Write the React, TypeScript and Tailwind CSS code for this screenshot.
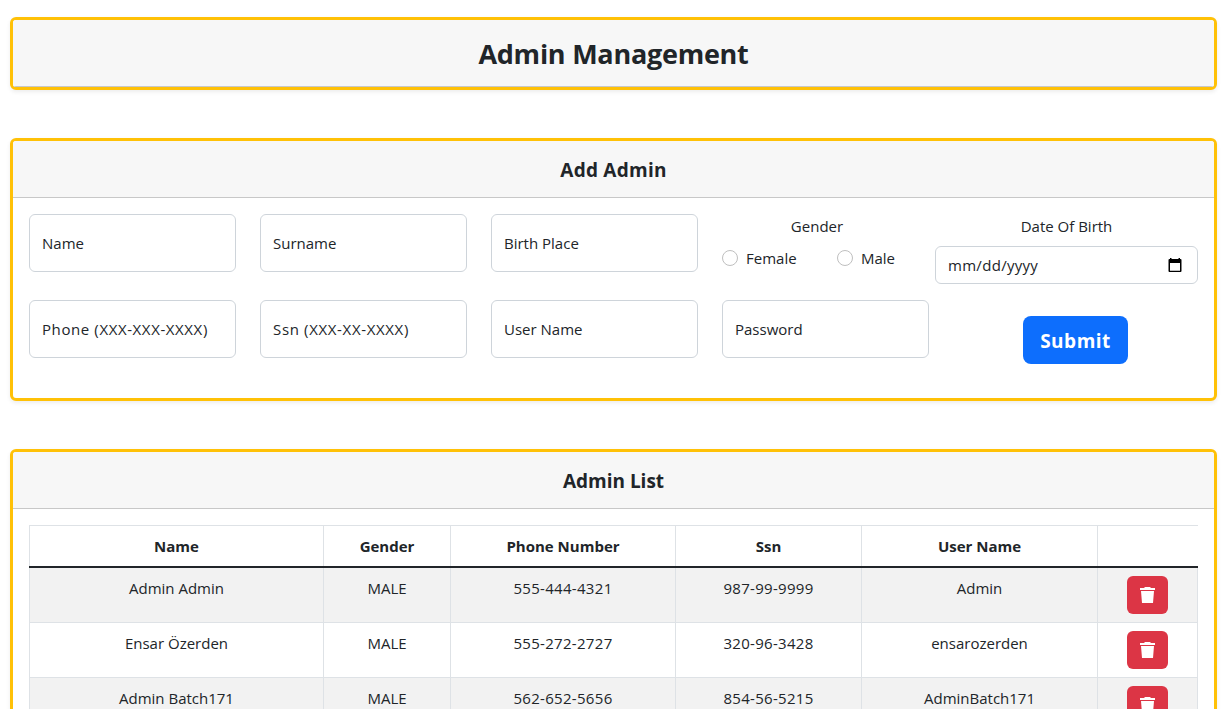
import React from "react";

const columns = ["Name", "Gender", "Phone Number", "Ssn", "User Name", ""];

const admins = [
  ["Admin Admin", "MALE", "555-444-4321", "987-99-9999", "Admin"],
  ["Ensar Özerden", "MALE", "555-272-2727", "320-96-3428", "ensarozerden"],
  ["Admin Batch171", "MALE", "562-652-5656", "854-56-5215", "AdminBatch171"],
];

const gridColumns = "grid grid-cols-[294px_127px_225px_186px_236px_101px]";

function Card({ children, className = "" }: { children: React.ReactNode; className?: string }) {
  return (
    <section className={`overflow-hidden rounded-[6px] border-[3px] border-[#ffc107] bg-white shadow-[0_2px_4px_rgba(0,0,0,0.075)] ${className}`}>
      {children}
    </section>
  );
}

function CardHeader({ title, className = "" }: { title: string; className?: string }) {
  return (
    <header className="flex h-[57px] items-center justify-center border-b border-[#c8c8c8] bg-[#f7f7f7] pt-0.5">
      <h2 className={`text-[19px] leading-6 font-bold ${className}`}>{title}</h2>
    </header>
  );
}

function Field({ label, className = "" }: { label: string; className?: string }) {
  return (
    <label className="flex h-[58px] w-[207px] items-center rounded-[6px] border border-[#ced4da] px-3">
      <span className={`whitespace-nowrap ${className}`}>{label}</span>
    </label>
  );
}

function Radio({ label }: { label: string }) {
  return (
    <label className="flex items-center gap-2">
      <input type="radio" name="gender" className="size-4 appearance-none rounded-full border border-[#bfbfbf] bg-white" />
      <span>{label}</span>
    </label>
  );
}

function TrashIcon() {
  return (
    <svg width="15" height="18" viewBox="0 0 15 18" fill="#fff">
      <path d="M0 2h4l1-1h5l1 1h4v2H0zM1 5h13l-1 12H2z" />
    </svg>
  );
}

function CalendarIcon() {
  return (
    <svg width="14" height="15" viewBox="0 0 14 15" className="mr-[3px]">
      <path fillRule="evenodd" d="M2 0h1.500v1h7V0H12v1h.5a1 1 0 0 1 1 1v11a1 1 0 0 1-1 1h-11a1 1 0 0 1-1-1V2a1 1 0 0 1 1-1H2zM2 5v7.700h10V5z" />
    </svg>
  );
}

export default function App() {
  return (
    <main className="h-[709px] overflow-hidden bg-white pt-[17px] pr-2 pl-2.5 font-['Open_Sans',sans-serif] text-[15px] leading-6 text-[#212529]">
      <Card className="h-[73px]">
        <header className="flex h-[67px] items-center justify-center border-b border-[#c8c8c8] bg-[#f7f7f7] pt-0.5">
          <h1 className="text-[27px] leading-8 font-bold tracking-[-0.25px]">Admin Management</h1>
        </header>
      </Card>

      <Card className="mt-12 h-[263px]">
        <CardHeader title="Add Admin" className="tracking-[0.25px]" />
        <div className="flex flex-col gap-4 p-4">
          <div className="flex">
            <div className="flex gap-6">
              <Field label="Name" />
              <Field label="Surname" />
              <Field label="Birth Place" />
            </div>
            <div className="ml-6 w-[190px]">
              <div className="text-center">Gender</div>
              <div className="mt-2 flex justify-between pr-[17px]">
                <Radio label="Female" />
                <Radio label="Male" />
              </div>
            </div>
            <div className="ml-[23px] w-[263px]">
              <div className="text-center">Date Of Birth</div>
              <div className="mt-2 flex h-[38px] items-center justify-between rounded-[6px] border border-[#ced4da] px-3">
                <span className="tracking-[0.3px]">mm/dd/yyyy</span>
                <CalendarIcon />
              </div>
            </div>
          </div>
          <div className="flex gap-6">
            <Field label="Phone (XXX-XXX-XXXX)" className="tracking-[0.6px]" />
            <Field label="Ssn (XXX-XX-XXXX)" className="tracking-[0.65px]" />
            <Field label="User Name" />
            <Field label="Password" />
            <button className="mt-4 ml-[70px] h-12 w-[105px] rounded-lg bg-[#0d6efd] pt-0.5 text-[19px] font-bold tracking-[0.5px] text-white">Submit</button>
          </div>
        </div>
      </Card>

      <Card className="mt-12 h-[300px]">
        <CardHeader title="Admin List" />
        <div className="p-4">
          <div className={`${gridColumns} h-[43px] border-t border-b-2 border-t-[#dee2e6] border-b-[#212529] text-center font-bold`}>
            {columns.map((column) => (
              <div key={column} className="border-l border-[#dee2e6] pt-2">{column}</div>
            ))}
          </div>
          {admins.map((row, index) => (
            <div key={row[0]} className={`${gridColumns} h-[55px] border-r border-b border-[#dee2e6] text-center ${index % 2 === 0 ? "bg-[#f2f2f2]" : "bg-white"}`}>
              {row.map((cell, i) => (
                <div key={i} className={`border-l border-[#dee2e6] pt-2 ${i === 2 || i === 3 ? "tracking-[0.3px]" : ""}`}>{cell}</div>
              ))}
              <div className="flex justify-center border-l border-[#dee2e6] pt-2 pr-0.5">
                <button className="flex h-[38px] w-[41px] items-center justify-center rounded-[6px] bg-[#dc3545]"><TrashIcon /></button>
              </div>
            </div>
          ))}
        </div>
      </Card>
    </main>
  );
}
